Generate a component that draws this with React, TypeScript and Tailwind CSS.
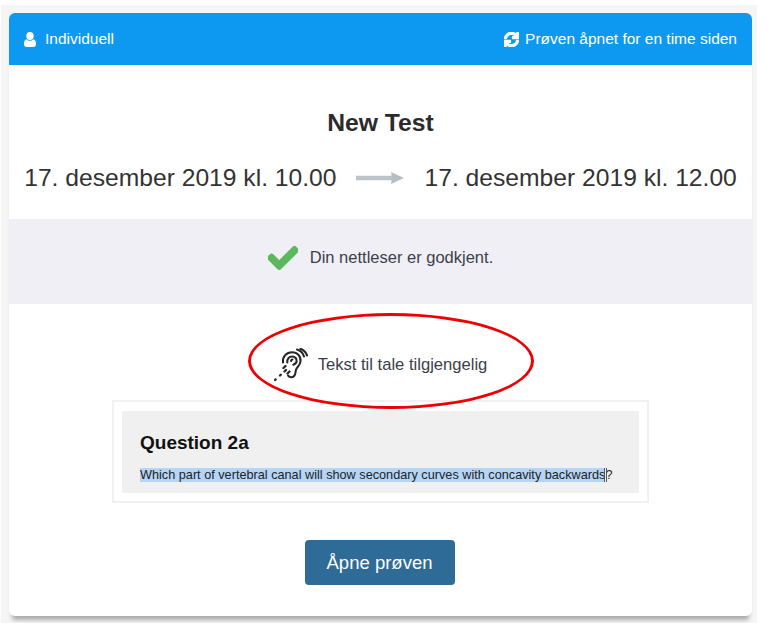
import { FaCheck, FaSync } from 'react-icons/fa';

function UserIcon() {
  return (
    <svg width="12" height="15" viewBox="0 0 12 15" fill="currentColor" className="shrink-0">
      <ellipse cx="6" cy="4" rx="3.700" ry="4" />
      <path d="M2.800 7.300C3.700 8.300 4.800 8.800 6 8.800s2.300-.5 3.200-1.500c1.900.3 2.800 1.800 2.800 4.700 0 1.900-1 3-2.500 3h-7C1 15 0 13.900 0 12c0-2.900.9-4.400 2.800-4.700z" />
    </svg>
  );
}

function Arrow() {
  return (
    <svg width="50" height="14" viewBox="0 0 50 14" className="shrink-0">
      <path d="M0 4.700h37v4.600H0z" fill="#bcc4c9" />
      <path d="M35 1l13 6-13 6 1-6z" fill="#b6bec4" />
    </svg>
  );
}

function EarIcon() {
  return (
    <svg width="34" height="33" viewBox="0 0 34 33" fill="none" stroke="#262626" strokeWidth="2.100" strokeLinecap="round" className="shrink-0">
      <path d="M9 14.500c-.8-6 3.700-10.300 9-10.300 5.500 0 9 4 8.500 9.300-.4 3.800-3.500 5.300-4.400 8-.9 2.800-.3 4.600-2 6.500-1.800 2-5 1.400-6-.5" />
      <path d="M13.300 14.500c-.4-3.600 1.900-6 4.800-6 3 0 5 2.300 4.500 5-.3 2-1.700 2.600-3.300 3.200" />
      <path d="M17 13c.2-1 .8-1.500 1.500-1.500" />
      <path d="M23 1.500c3.500 1 6 3.500 7 7M26.500 0.800c2.800 1 5.500 3.700 6.500 6.700" />
      <path d="M1 32l.6 -.6M6 27.500l.8 -.8M10.500 23.500l1.500 -1.500M13.500 25.500l2 -2M9.500 20l2 -2" strokeWidth="2.300" />
    </svg>
  );
}

function Screenshot() {
  return (
    <div className="mt-[19px] h-[103px] w-[537px] border-2 border-[#f1f1f1] bg-white p-2 pt-[9px]">
      <div className="h-[82px] w-full bg-[#f0f0f0] pt-[21px] pl-[18px]">
        <div className="text-[19px] leading-[22px] font-bold text-[#111]">Question 2a</div>
        <div className="mt-[14px] text-[12.700px] leading-[14px] text-[#222]">
          <span className="bg-[#b5d5f7]">Which part of vertebral canal will show secondary curves with concavity backwards</span>
          <span className="relative">
            ?
            <span className="absolute top-0 -left-px h-[14px] w-[3px] border-x border-[#555]" />
          </span>
        </div>
      </div>
    </div>
  );
}

export default function App() {
  return (
    <div className="h-[631px] w-[767px] bg-white pt-[5px] pl-px font-['Liberation_Sans',Arial,sans-serif]">
      <div className="h-[618px] w-[756px] overflow-hidden bg-[#f5f5f5] pt-2 pl-2">
        <div className="relative flex h-[603px] w-[743px] flex-col rounded-[6px] bg-white shadow-[0_7px_4px_-3px_rgba(0,0,0,0.3)]">
          <div className="flex h-[52px] items-center justify-between rounded-t-[6px] bg-[#0d99f2] px-[15px] text-[15.500px] text-white">
            <div className="flex items-center gap-[9px]">
              <UserIcon />
              <span>Individuell</span>
            </div>
            <div className="flex items-center gap-[6px]">
              <FaSync strokeWidth={40} className="h-[15px] w-[15px]" />
              <span>Prøven åpnet for en time siden</span>
            </div>
          </div>

          <h1 className="mt-[44px] text-center text-[24.700px] leading-[28px] font-bold text-[#2b2b2b]">New Test</h1>
          <div className="mt-[27px] flex items-center justify-center gap-[19px] text-[24.650px] leading-[28px] text-[#333]">
            <span>17. desember 2019 kl. 10.00</span>
            <Arrow />
            <span>17. desember 2019 kl. 12.00</span>
          </div>

          <div className="mt-[27px] flex h-[85px] items-center justify-center gap-[12px] bg-[#efeff5] pb-2 text-[16.500px] text-[#3a3f4a]">
            <FaCheck strokeWidth={30} className="h-[30px] w-[30px] text-[#5cb85c]" />
            <span>Din nettleser er godkjent.</span>
          </div>

          <div className="flex flex-1 flex-col items-center">
            <div className="mt-[44px] flex items-center gap-[10px] text-[16.600px] text-[#3a3f4a]">
              <EarIcon />
              <span className="translate-y-px">Tekst til tale tilgjengelig</span>
            </div>
            <Screenshot />
            <button className="mt-[37px] flex h-[45px] w-[150px] -translate-x-px items-center justify-center rounded-[4px] bg-[#2f6b97] text-[18.500px] text-white">
              Åpne prøven
            </button>
          </div>

          <div className="absolute top-[300px] left-[239px] h-[96px] w-[286px] rounded-[50%] border-[3px] border-[#ee0000]" />
        </div>
      </div>
    </div>
  );
}
